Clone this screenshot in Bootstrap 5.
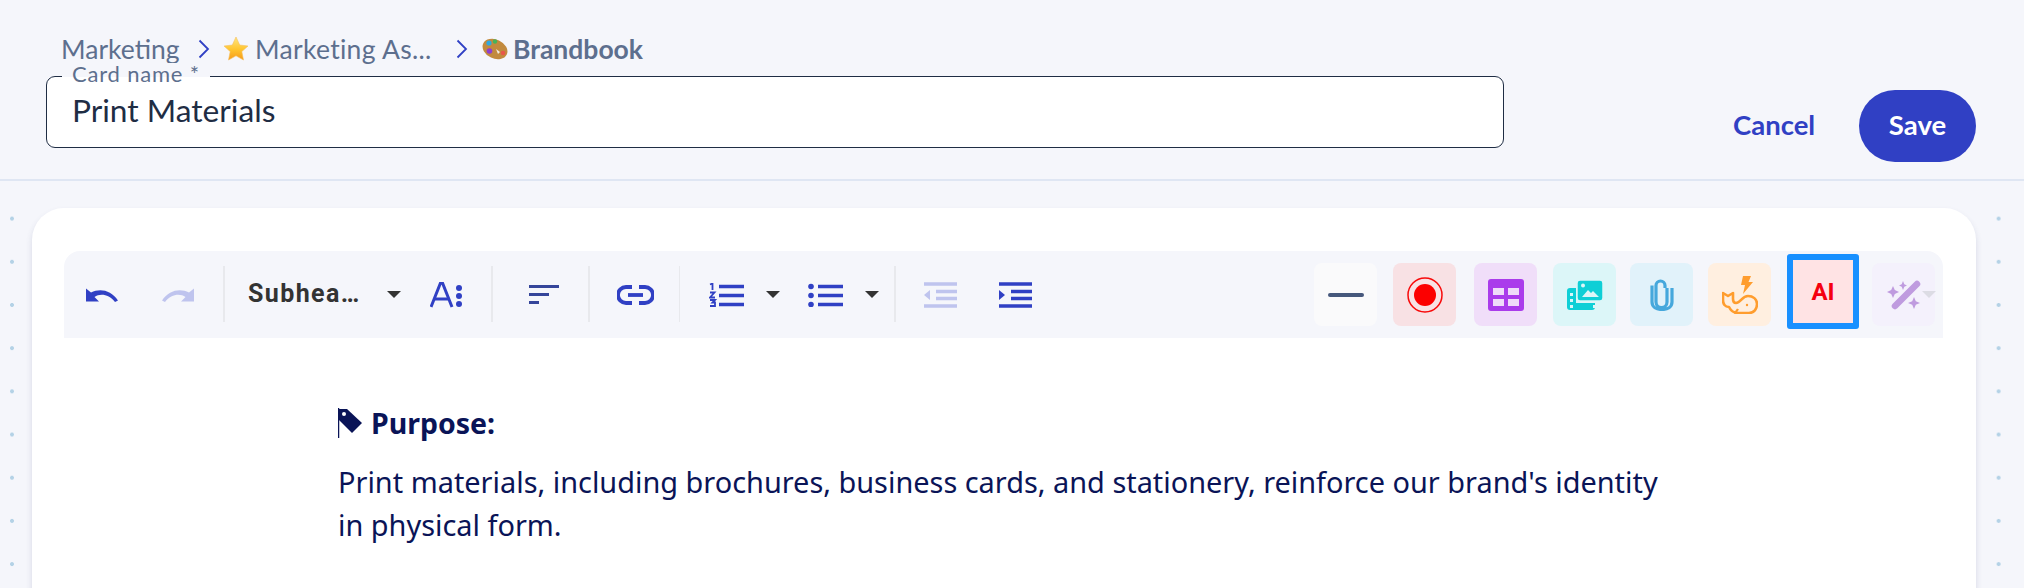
<!DOCTYPE html>
<html lang="en">
<head>
<meta charset="utf-8">
<title>Print Materials</title>
<link rel="stylesheet" href="https://cdn.jsdelivr.net/npm/bootstrap@5.3.0/dist/css/bootstrap.min.css">
<style>
html,body{height:588px;overflow:hidden;}
body{background:#f5f6fb;font-family:"Noto Sans",sans-serif;}
.top-bar{height:181px;border-bottom:2px solid #dfe6f3;padding:0 48px 0 46px;font-family:Lato,sans-serif;}
.crumbs{padding:21px 0 0 15px;height:76px;font-size:26.500px;line-height:26px;color:#5d6f8e;}
.crumbs svg{flex:none;}
.crumb-a{width:122px;flex:none;}
.crumb-sep{margin:0 13px 0 15px;}
.crumb-b{width:185px;margin-left:6px;flex:none;white-space:nowrap;letter-spacing:.3px;}
.crumb-sep2{margin:0 14px 0 16px;}
.crumb-c{font-weight:700;margin-left:5px;}
.name-box{width:1458px;height:72px;background:#fff;border:1.5px solid #1f2d44;border-radius:9px;padding:0 25px 3px;position:relative;font-size:31.700px;color:#1f2d44;display:flex;align-items:center;}
.name-label{position:absolute;left:15px;top:-14px;background:#f5f6fb;padding:0 10px;font-size:22px;letter-spacing:.8px;line-height:22px;color:#5d6f8e;height:14px;}
.act-cancel{font-size:27.500px;font-weight:700;color:#3040c4;text-decoration:none;width:83px;line-height:70px;white-space:nowrap;}
.act-save{width:117px;height:72px;border-radius:36px;background:#3040c4;border:0;color:#fff;font-size:27.500px;font-weight:700;margin-left:43px;padding:0 0 3px;}
.actions{padding-top:90px;}
.canvas{height:407px;padding:27px 48px 0 32px;background-color:#f5f6fb;background-image:radial-gradient(circle,#b4d2e6 0 1.8px,transparent 2.2px);background-size:43.2px 43.2px;background-position:-9.6px 16px;}
.sheet{background:#fff;border-radius:32px 32px 0 0;height:420px;box-shadow:0 4px 6px rgba(60,70,120,.16);padding:43px 32px 0 32px;}
.tools{height:87px;background:#f5f6fb;border-radius:16px 16px 0 0;position:relative;width:1879px;}
.ti{position:absolute;top:0;height:87px;display:flex;align-items:center;}
.vsep{position:absolute;top:15px;width:2px;height:56px;background:#e8e9ed;}
.caret-d{position:absolute;top:40px;width:0;height:0;border-left:7px solid transparent;border-right:7px solid transparent;border-top:7px solid #333;}
.style-name{position:absolute;left:184px;top:0;line-height:86px;font-family:Roboto,sans-serif;font-weight:700;font-size:25px;letter-spacing:1.400px;color:#333;white-space:nowrap;}
.sq{position:absolute;top:12px;width:63px;height:63px;border-radius:8px;display:flex;align-items:center;justify-content:center;}
.sq-ai-frame{position:absolute;left:1723px;top:3px;width:72px;height:75px;border:6px solid #1890ff;border-radius:3px;background:#ffe3e4;display:flex;align-items:center;justify-content:center;color:#f5000f;font-family:Roboto,sans-serif;font-weight:700;font-size:24px;}
.doc{padding:65px 0 0 274px;width:1616px;color:#0a1457;font-size:28.900px;line-height:43px;}
.doc-h{font-weight:700;font-size:28.500px;display:flex;align-items:center;gap:8px;margin-bottom:17px;line-height:40px;}
</style>
</head>
<body>
<header class="top-bar d-flex justify-content-between">
  <div>
    <nav class="crumbs d-flex align-items-center">
      <span class="crumb-a">Marketing</span>
      <svg class="crumb-sep" width="12" height="20" viewBox="0 0 12 20"><path d="M1.500 1.500 10 10l-8.500 8.500" fill="none" stroke="#3040c4" stroke-width="1.800"/></svg>
      <svg width="26" height="26" viewBox="0 0 26 26"><defs><linearGradient id="sg" x1="0" y1="0" x2="0" y2="1"><stop offset="0" stop-color="#ffe680"/><stop offset=".55" stop-color="#ffc42e"/><stop offset="1" stop-color="#f59a1b"/></linearGradient></defs><path d="M13 1l3.700 8 8.300 1-6.200 5.600 1.700 8.400L13 19.800 5.500 24l1.700-8.400L1 10l8.300-1z" fill="url(#sg)" stroke="#f5c060" stroke-width=".6"/></svg>
      <span class="crumb-b">Marketing As...</span>
      <svg class="crumb-sep2" width="12" height="20" viewBox="0 0 12 20"><path d="M1.500 1.500 10 10l-8.500 8.500" fill="none" stroke="#3040c4" stroke-width="1.800"/></svg>
      <svg width="26" height="24" viewBox="0 0 26 24"><g transform="rotate(25 13 12)"><ellipse cx="13" cy="12" rx="13" ry="9.500" fill="#c28a3e"/></g><circle cx="7" cy="6" r="2.600" fill="#2fa8e0"/><circle cx="13" cy="4.500" r="2.200" fill="#45b45a"/><circle cx="7.500" cy="14" r="2.800" fill="#8d3fd0"/><circle cx="21" cy="16" r="2.300" fill="#e8574a"/><path d="M14 12l4 3-2 2z" fill="#f2ede2"/></svg>
      <span class="crumb-c">Brandbook</span>
    </nav>
    <div class="name-box">
      <span class="name-label">Card name *</span>
      Print Materials
    </div>
  </div>
  <div class="actions d-flex align-items-start">
    <a class="act-cancel" href="#">Cancel</a>
    <button class="act-save" type="button">Save</button>
  </div>
</header>
<main class="canvas">
  <section class="sheet">
    <div class="tools">
      <div class="ti" style="left:22px"><svg width="32" height="14" viewBox="0 0 32 14"><path d="M0 .500V13.500h13L8.500 9C14 5 23 6 29 14l3-1.500C25 2 14 0 5 4.500z" fill="#3040c4"/></svg></div>
      <div class="ti" style="left:98px"><svg width="32" height="14" viewBox="0 0 32 14"><path d="M32 .500V13.500H19L23.500 9C18 5 9 6 3 14l-3-1.500C7 2 18 0 27 4.500z" fill="#bfc4ee"/></svg></div>
      <i class="vsep" style="left:159px"></i>
      <span class="style-name">Subhea…</span>
      <i class="caret-d" style="left:323px"></i>
      <div class="ti" style="left:366px"><svg width="33" height="26" viewBox="0 0 33 26"><path d="M1 25 10.500 1h2L22 25" fill="none" stroke="#3040c4" stroke-width="3"/><path d="M5 17h13" stroke="#3040c4" stroke-width="3"/><circle cx="29" cy="6" r="3" fill="#3040c4"/><circle cx="29" cy="14" r="3" fill="#3040c4"/><circle cx="29" cy="22" r="3" fill="#3040c4"/></svg></div>
      <i class="vsep" style="left:427px"></i>
      <div class="ti" style="left:465px"><svg width="30" height="20" viewBox="0 0 30 20"><path d="M0 1.500h30M0 9.500h20M0 17.500h10" stroke="#35459a" stroke-width="3"/></svg></div>
      <i class="vsep" style="left:524px"></i>
      <div class="ti" style="left:553px"><svg width="37" height="20" viewBox="0 0 37 20"><path d="M15 2H9a8 8 0 0 0 0 16h6M22 2h6a8 8 0 0 1 0 16h-6" fill="none" stroke="#3040c4" stroke-width="3.800"/><path d="M11 10h15" stroke="#3040c4" stroke-width="3.800"/></svg></div>
      <i class="vsep" style="left:615px;width:1px"></i>
      <div class="ti" style="left:645px"><svg width="35" height="24" viewBox="0 0 35 24"><path d="M10 3.500h25M10 12.500h25M10 21.500h25" stroke="#3040c4" stroke-width="3.600"/><path d="M1 1.500 3.500 .500V7M1 9.500h4.500L1 14.500h5M1 17h5l-2.500 2.500H6v3.500H1" fill="none" stroke="#3040c4" stroke-width="1.800"/></svg></div>
      <i class="caret-d" style="left:702px"></i>
      <div class="ti" style="left:744px"><svg width="35" height="24" viewBox="0 0 35 24"><circle cx="3" cy="3.500" r="2.800" fill="#3040c4"/><circle cx="3" cy="12.500" r="2.800" fill="#3040c4"/><circle cx="3" cy="21.500" r="2.800" fill="#3040c4"/><path d="M10 3.500h25M10 12.500h25M10 21.500h25" stroke="#3040c4" stroke-width="3.600"/></svg></div>
      <i class="caret-d" style="left:801px"></i>
      <i class="vsep" style="left:830px"></i>
      <div class="ti" style="left:860px"><svg width="33" height="26" viewBox="0 0 33 26"><path d="M0 2h33M12 9.500h21M12 16.500h21M0 24h33" stroke="#bfc4ee" stroke-width="3.400"/><path d="M6 8v10l-6-5z" fill="#bfc4ee"/></svg></div>
      <div class="ti" style="left:935px"><svg width="33" height="26" viewBox="0 0 33 26"><path d="M0 2h33M12 9.500h21M12 16.500h21M0 24h33" stroke="#3040c4" stroke-width="3.400"/><path d="M0 8v10l6-5z" fill="#3040c4"/></svg></div>

      <div class="sq" style="left:1250px;background:#fafafb"><svg width="36" height="4" viewBox="0 0 36 4"><rect width="36" height="4" rx="2" fill="#46587c"/></svg></div>
      <div class="sq" style="left:1329px;background:#f8e1e4"><svg width="36" height="36" viewBox="0 0 36 36"><circle cx="18" cy="18" r="17" fill="none" stroke="#f80a0a" stroke-width="1.500"/><circle cx="18" cy="18" r="11" fill="#fc0000"/></svg></div>
      <div class="sq" style="left:1410px;background:#f0def9"><svg width="36" height="32" viewBox="0 0 36 32"><rect width="36" height="32" rx="3" fill="#aa3ceb"/><g fill="#efdcf9"><rect x="5" y="9" width="11" height="7"/><rect x="20" y="9" width="11" height="7"/><rect x="5" y="20" width="11" height="7"/><rect x="20" y="20" width="11" height="7"/></g></svg></div>
      <div class="sq" style="left:1489px;background:#dcf6f8"><svg width="36" height="30" viewBox="0 0 36 30"><path d="M0 11a3 3 0 0 1 3-3h6v22H3a3 3 0 0 1-3-3z" fill="#0fcfd6"/><path d="M8 23h20v4a3 3 0 0 1-3 3H8z" fill="#0fcfd6"/><rect x="10" y="0" width="26" height="21" rx="3" fill="#0fcfd6" stroke="#dcf6f8" stroke-width="1.500"/><path d="m15 17 6-7 3 3 2-2 6 6z" fill="#dcf6f8"/><circle cx="16" cy="5.500" r="2" fill="#dcf6f8"/><rect x="3" y="13" width="3" height="3" fill="#dcf6f8"/><rect x="3" y="19" width="3" height="3" fill="#dcf6f8"/><rect x="3" y="25" width="3" height="3" fill="#dcf6f8"/><rect x="26" y="25" width="3" height="3" fill="#dcf6f8"/></svg></div>
      <div class="sq" style="left:1566px;background:#e1f2fa"><svg width="24" height="32" viewBox="0 0 24 32"><path d="M17 9v14a5.500 5.500 0 0 1-11 0V6.500a4.500 4.500 0 0 1 9 0V9M2 6.500V23c0 5 4.500 7.500 10 7.500s10-2.500 10-7.500V9" fill="none" stroke="#46a8dc" stroke-width="3.200"/></svg></div>
      <div class="sq" style="left:1644px;background:#ffefe0"><svg width="36" height="38" viewBox="0 0 36 38"><path d="M21 0h8l-2.500 6H31L21 18l2-9h-4z" fill="#ff9d2e"/><path d="M1 17l5 3 5-3v6c0 2 1 4 3 4 5 0 6-7 12-7 5 0 9 3 9 8 0 5-3 9-8 9H16c-4 0-7-2-9-6-4 0-6-3-6-7z" fill="none" stroke="#ff9d2e" stroke-width="2.600" stroke-linejoin="round"/><path d="M12 37c2-1 3-2 4-4" fill="none" stroke="#ff9d2e" stroke-width="2.200"/><circle cx="25" cy="29" r="1.200" fill="#ff9d2e"/></svg></div>
      <div class="sq-ai-frame">AI</div>
      <div class="sq" style="left:1808px;background:#f4f1fc"><svg width="34" height="30" viewBox="0 0 34 30"><path d="M30 4 8 26" stroke="#bf9bdf" stroke-width="6.500" stroke-linecap="round"/><g fill="#bf9bdf"><path d="m6 6 1.800 4L12 12l-4.200 2L6 18l-1.800-4L0 12l4.200-2z"/><path d="m16 1 1.300 3.200L20 5.500l-2.700 1.300L16 10l-1.300-3.200L12 5.500l2.700-1.300z"/><path d="m27 17 1.800 4.200L33 23l-4.200 1.800L27 29l-1.800-4.200L21 23l4.200-1.800z"/></g></svg></div>
      <i class="caret-d" style="left:1858px;border-top-color:#dcdce4"></i>
    </div>
    <article class="doc">
      <div class="doc-h"><svg width="25" height="30" viewBox="0 0 25 30"><path d="M.500 0v30" stroke="#0a1457" stroke-width="1.500"/><path d="M1 1h8l15 14-10 10L1 12z" fill="#0a1457"/><circle cx="6" cy="6" r="2" fill="#fff"/></svg><span>Purpose:</span></div>
      <p class="mb-0">Print materials, including brochures, business cards, and stationery, reinforce our brand's identity in physical form.</p>
    </article>
  </section>
</main>
</body>
</html>
